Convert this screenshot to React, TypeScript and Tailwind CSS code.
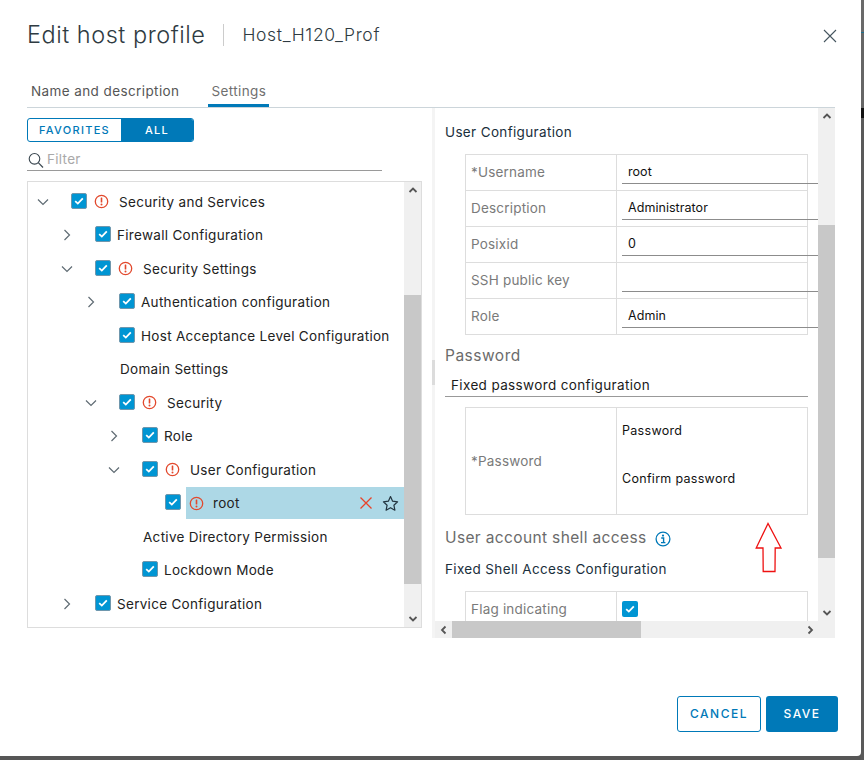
import React from "react";

const Check = ({ plain = false }: { plain?: boolean }) => (
  <span
    className={
      "flex h-[16px] w-[16px] shrink-0 -translate-y-px items-center justify-center rounded-[2px] bg-[#0095d3] " +
      (plain ? "" : "border border-[#6f97ad]")
    }
  >
    <svg width="10" height="8" viewBox="0 0 10 8" fill="none">
      <path d="M1.2 4.2 L3.8 6.6 L8.8 1.4" stroke="#fff" strokeWidth="1.8" />
    </svg>
  </span>
);

const Err = () => (
  <svg width="15" height="15" viewBox="0 0 15 15" fill="none" className="shrink-0">
    <circle cx="7.5" cy="7.5" r="6.2" stroke="#e2492d" strokeWidth="1.3" />
    <rect x="6.7" y="3.6" width="1.6" height="5" rx="0.5" fill="#e2492d" />
    <circle cx="7.5" cy="10.6" r="1" fill="#e2492d" />
  </svg>
);

const Chev = ({ dir }: { dir?: "down" | "right" }) => (
  <span className="flex h-5 w-5 shrink-0 items-center justify-center">
    {dir === "down" && (
      <svg width="12" height="8" viewBox="0 0 12 8" fill="none">
        <path d="M1 1.5 L6 6.5 L11 1.5" stroke="#5f6b73" strokeWidth="1.2" />
      </svg>
    )}
    {dir === "right" && (
      <svg width="8" height="12" viewBox="0 0 8 12" fill="none">
        <path d="M1.5 1 L6.5 6 L1.5 11" stroke="#5f6b73" strokeWidth="1.2" />
      </svg>
    )}
  </span>
);

const Caret = ({ dir }: { dir: "up" | "down" | "left" | "right" }) => {
  const d = {
    up: "M1.5 6 L5 2.5 L8.5 6",
    down: "M1.5 3 L5 6.5 L8.5 3",
    left: "M6.5 1.5 L3 5 L6.5 8.5",
    right: "M3.5 1.5 L7 5 L3.5 8.5",
  }[dir];
  return (
    <span className="flex h-[17px] w-[17px] shrink-0 items-center justify-center">
      <svg width="10" height="10" viewBox="0 0 10 10" fill="none">
        <path d={d} stroke="#555" strokeWidth="1.8" />
      </svg>
    </span>
  );
};

type TreeRow = {
  pad: string;
  chev?: "down" | "right";
  text: string;
  check?: boolean;
  err?: boolean;
};

const rows: TreeRow[] = [
  { pad: "pl-[5px]", chev: "down", text: "Security and Services", check: true, err: true },
  { pad: "pl-[29px]", chev: "right", text: "Firewall Configuration", check: true },
  { pad: "pl-[29px]", chev: "down", text: "Security Settings", check: true, err: true },
  { pad: "pl-[53px]", chev: "right", text: "Authentication configuration", check: true },
  { pad: "pl-[53px]", text: "Host Acceptance Level Configuration", check: true },
  { pad: "pl-[53px]", text: "Domain Settings" },
  { pad: "pl-[53px]", chev: "down", text: "Security", check: true, err: true },
  { pad: "pl-[76px]", chev: "right", text: "Role", check: true },
  { pad: "pl-[76px]", chev: "down", text: "User Configuration", check: true, err: true },
  { pad: "", text: "root" },
  { pad: "pl-[76px]", text: "Active Directory Permission" },
  { pad: "pl-[76px]", text: "Lockdown Mode", check: true },
  { pad: "pl-[29px]", chev: "right", text: "Service Configuration", check: true },
];

const Row = ({ r }: { r: TreeRow }) => {
  if (r.text === "root") {
    return (
      <div className="flex h-[33.5px] items-center pl-[99px]">
        <Chev />
        <span className="mr-[18px]" />
        <Check />
        <div className="ml-[5px] flex h-[32px] flex-1 items-center bg-[#add8e6] pl-[3px]">
          <Err />
          <span className="ml-[9px]">root</span>
          <svg width="14" height="14" viewBox="0 0 14 14" fill="none" className="ml-auto">
            <path d="M1.5 1.5 L12.5 12.5 M12.5 1.5 L1.5 12.5" stroke="#e8432a" strokeWidth="1.3" />
          </svg>
          <svg width="17" height="17" viewBox="0 0 17 17" fill="none" className="ml-[9px] mr-[5px]">
            <path
              d="M8.5 1.6 L10.6 6.2 L15.6 6.8 L11.9 10.2 L12.9 15.2 L8.5 12.7 L4.1 15.2 L5.1 10.2 L1.4 6.8 L6.4 6.2 Z"
              stroke="#22343f"
              strokeWidth="1.2"
              strokeLinejoin="round"
            />
          </svg>
        </div>
      </div>
    );
  }
  return (
    <div className={"flex h-[33.5px] items-center " + r.pad}>
      <Chev dir={r.chev} />
      <span className="mr-[18px]" />
      {r.check && <Check />}
      {r.err ? (
        <>
          <span className="ml-[7px]">
            <Err />
          </span>
          <span className="ml-[10px]">{r.text}</span>
        </>
      ) : (
        <span className={r.check ? "ml-[6px]" : "ml-[1px]"}>{r.text}</span>
      )}
    </div>
  );
};

const FieldRow = ({ label, value }: { label: string; value: string }) => (
  <div className="flex h-[36px] border-b border-[#ddd]">
    <div className="flex w-[151px] shrink-0 items-center border-r border-[#ddd] pl-[5px] tracking-[0.2px] text-[#7a7a7a]">
      {label}
    </div>
    <div className="ml-[5px] mt-[3px] flex h-[26px] w-[196px] shrink-0 items-center border-b border-[#8c8c8c] pl-[6px] pt-[3px] text-[12.5px] tracking-[0.05px] text-[#111]">
      {value}
    </div>
  </div>
);

export default function App() {
  return (
    <div className="relative flex h-[760px] w-[864px] overflow-hidden bg-[#565656] font-['Inter',sans-serif] text-[13.5px] tracking-[0.3px] text-[#222]">
      <div className="flex h-[756px] w-[861px] shrink-0 flex-col rounded-br-[4px] bg-white">
        {/* Header */}
        <div className="flex h-[70px] shrink-0 items-center pl-[27px] pr-[24px]">
          <h1 className="text-[23.5px] font-light tracking-[0.52px] text-[#2f3b42]">Edit host profile</h1>
          <span className="mx-[18px] h-[22px] w-px bg-[#ccc]" />
          <span className="text-[17.5px] font-light tracking-[0.66px] text-[#2f3b42]">Host_H120_Prof</span>
          <svg width="14" height="14" viewBox="0 0 14 14" fill="none" className="ml-auto translate-y-px">
            <path d="M1 1 L13 13 M13 1 L1 13" stroke="#46565f" strokeWidth="1.1" />
          </svg>
        </div>

        {/* Tabs */}
        <div className="ml-[27px] flex h-[38px] w-[808px] shrink-0 items-end border-b border-[#ccd5da] tracking-[0.4px] text-[#565656]">
          <span className="ml-[4px] flex h-[28px] items-start pt-[2px]">Name and description</span>
          <span className="ml-[29px] flex h-[28px] items-start border-b-[3px] border-[#0079b8] px-[3px] pt-[2px] text-[#6f6f6f]">
            Settings
          </span>
        </div>

        {/* Main */}
        <div className="ml-[27px] flex h-[530px] w-[808px] shrink-0">
          {/* Left */}
          <div className="w-[405px] shrink-0 pt-[10px]">
            <div className="flex h-[24px] w-[167px] overflow-hidden rounded-[3px] border border-[#0079b8] text-[11px] font-medium tracking-[1.3px]">
              <span className="flex w-[93px] items-center justify-center text-[#0079b8]">FAVORITES</span>
              <span className="flex flex-1 items-center justify-center bg-[#0079b8] text-white">ALL</span>
            </div>
            <div className="mt-[8px] flex h-[21px] w-[355px] items-center border-b border-[#9a9a9a]">
              <svg width="16" height="17" viewBox="0 0 16 17" fill="none" className="ml-[1px]">
                <circle cx="6.5" cy="6.8" r="5.3" stroke="#3a4750" strokeWidth="1.1" />
                <path d="M10.5 10.8 L15 15.5" stroke="#3a4750" strokeWidth="1.2" />
              </svg>
              <span className="ml-[3px] -translate-y-px text-[#a9a9a9]">Filter</span>
            </div>
            <div className="mt-[10px] flex h-[447px] w-[395px] border border-[#ddd]">
              <div className="flex-1 pt-[3px] text-[#222]">
                {rows.map((r) => (
                  <Row key={r.text} r={r} />
                ))}
              </div>
              <div className="flex w-[17px] shrink-0 flex-col bg-[#f0f0f0]">
                <Caret dir="up" />
                <div className="h-[96px]" />
                <div className="h-[289px] bg-[#c8c8c8]" />
                <div className="flex-1" />
                <Caret dir="down" />
              </div>
            </div>
          </div>

          {/* Right */}
          <div className="flex w-[403px] shrink-0">
            <div className="flex w-[3px] shrink-0 flex-col bg-[#f4f4f4] pt-[252px]">
              <div className="h-[25px] bg-[#dcdcdc]" />
            </div>
            <div className="flex w-[400px] flex-col">
              <div className="flex h-[513px] shrink-0">
                <div className="w-[383px] shrink-0 overflow-hidden pl-[10px] pt-[14px]">
                  <div className="h-[20px] font-normal leading-[20px] tracking-[0.35px] text-[#1a2f3c]">User Configuration</div>
                  <div className="ml-[20px] mt-[12px] w-[343px] border-l border-r border-t border-[#ddd]">
                    <FieldRow label="*Username" value="root" />
                    <FieldRow label="Description" value="Administrator" />
                    <FieldRow label="Posixid" value="0" />
                    <FieldRow label="SSH public key" value="" />
                    <FieldRow label="Role" value="Admin" />
                  </div>
                  <div className="mt-[9px] h-[24px] text-[15.5px] leading-[24px] tracking-[0.5px] text-[#6b6b6b]">Password</div>
                  <div className="mt-[6px] flex h-[23px] w-[363px] items-center border-b border-[#999] pl-[6px] tracking-[0.36px] text-[#1b1b1b]">
                    Fixed password configuration
                  </div>
                  <div className="ml-[20px] mt-[10px] flex h-[108px] w-[343px] border border-[#ddd]">
                    <div className="flex w-[151px] shrink-0 items-center border-r border-[#ddd] pl-[5px] tracking-[0.2px] text-[#7a7a7a]">*Password</div>
                    <div className="pl-[5px] text-[12.5px] text-[#111]">
                      <div className="flex h-[46px] items-center">Password</div>
                      <div className="flex h-[50px] items-center">Confirm password</div>
                    </div>
                  </div>
                  <div className="mt-[11px] flex h-[24px] items-center text-[15.5px] tracking-[0.36px] text-[#6b6b6b]">
                    User account shell access
                    <svg width="16" height="16" viewBox="0 0 16 16" fill="none" className="ml-[9px] translate-y-px">
                      <circle cx="8" cy="8" r="6.9" stroke="#0079b8" strokeWidth="1.3" />
                      <circle cx="8" cy="4.6" r="1.1" fill="#0079b8" />
                      <path d="M6.2 7 H8.6 V11.4 M6 11.6 H10.4" stroke="#0079b8" strokeWidth="1.4" />
                    </svg>
                  </div>
                  <div className="mt-[9px] h-[20px] font-normal leading-[20px] tracking-[0.35px] text-[#1a2f3c]">
                    Fixed Shell Access Configuration
                  </div>
                  <div className="ml-[20px] mt-[12px] flex h-[36px] w-[343px] border-l border-r border-t border-[#ddd]">
                    <div className="flex w-[151px] shrink-0 items-center border-r border-[#ddd] pl-[5px] tracking-[0.2px] text-[#7a7a7a]">Flag indicating</div>
                    <div className="flex items-center pl-[5px]">
                      <Check plain />
                    </div>
                  </div>
                </div>
                <div className="flex w-[17px] shrink-0 flex-col bg-[#f0f0f0]">
                  <Caret dir="up" />
                  <div className="h-[100px]" />
                  <div className="h-[333px] bg-[#c8c8c8]" />
                  <div className="flex-1" />
                  <Caret dir="down" />
                </div>
              </div>
              <div className="flex h-[17px] shrink-0 bg-[#f0f0f0]">
                <Caret dir="left" />
                <div className="w-[189px] bg-[#c8c8c8]" />
                <div className="flex-1" />
                <Caret dir="right" />
                <div className="w-[17px]" />
              </div>
            </div>
          </div>
        </div>

        {/* Footer */}
        <div className="flex flex-1 items-end justify-end gap-[5px] pb-[24px] pr-[23px] text-[12px] font-medium tracking-[1.5px]">
          <button className="h-[36px] w-[84px] rounded-[3px] border border-[#0079b8] text-[#0079b8]">CANCEL</button>
          <button className="h-[36px] w-[72px] rounded-[3px] bg-[#0079b8] text-white">SAVE</button>
        </div>
      </div>

      {/* Backdrop strip at right */}
      <div className="flex w-[3px] flex-col">
        <div className="h-[32px] bg-[#6a6a6a]" />
        <div className="h-px bg-[#1d6f8c]" />
        <div className="h-[75px] bg-[#666]" />
        <div className="h-[10px] bg-[#111]" />
        <div className="flex-1 bg-[#5a5a5a]" />
      </div>

      {/* Annotation arrow over the form */}
      <svg width="28" height="52" viewBox="0 0 28 52" fill="none" className="absolute left-[755px] top-[522px]">
        <path d="M13 1.5 L1.2 26 L8 26 L8.2 49.5 L20 49.5 L20.2 26 L26 26 Z" stroke="#ee1111" strokeWidth="1.3" fill="#fff" />
      </svg>
    </div>
  );
}
